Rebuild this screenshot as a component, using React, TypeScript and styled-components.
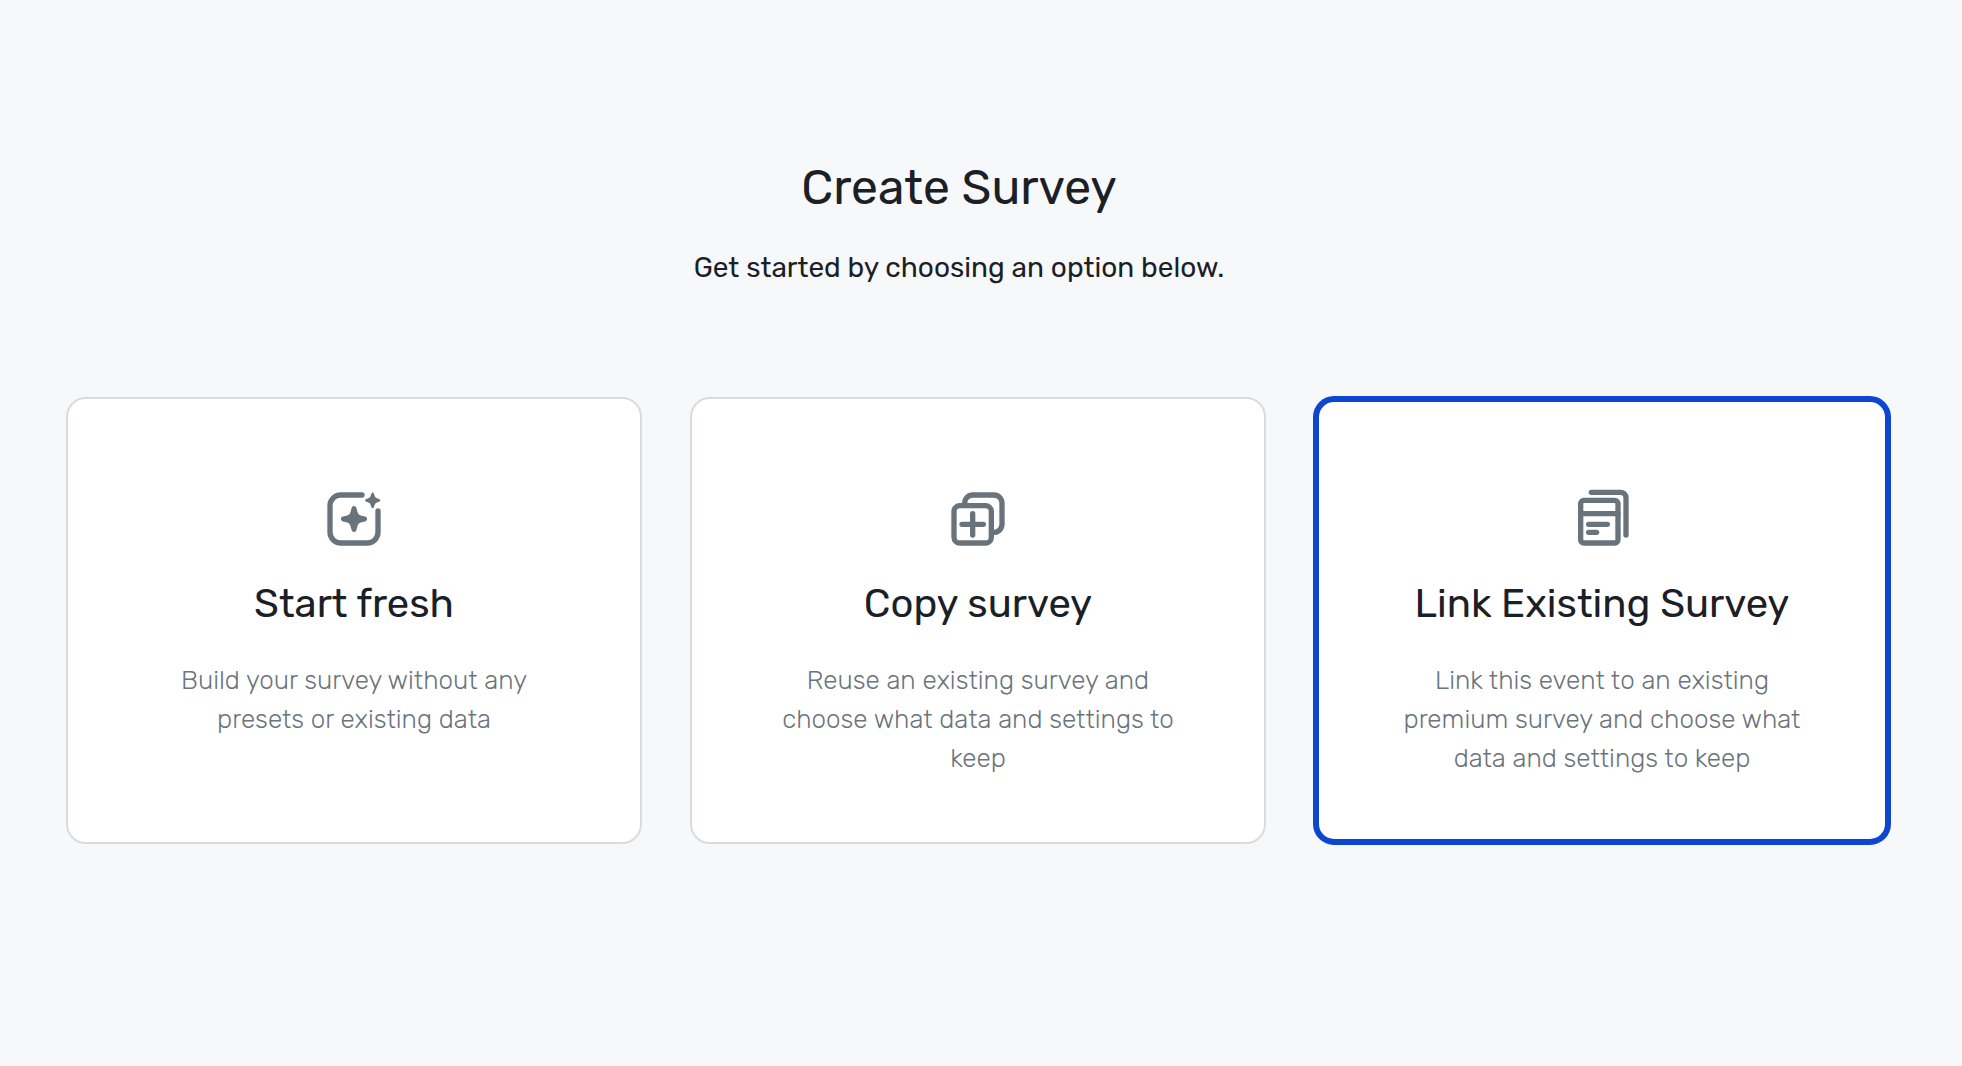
import React, { useState } from "react";
import styled, { createGlobalStyle } from "styled-components";

const GlobalStyle = createGlobalStyle`
  *, *::before, *::after { box-sizing: border-box; }
  body {
    margin: 0;
    background: #f7f8fa;
    color: #1b2026;
    font-family: Rubik, Roboto, "Liberation Sans", sans-serif;
  }
`;

const Page = styled.main`
  min-height: 100vh;
  padding: 156px 72px 64px 66px;
`;

const Header = styled.header`
  margin-bottom: 109px;
  padding-right: 38px;
  text-align: center;
`;

const Title = styled.h1`
  margin: 0 0 28px;
  font-size: 48px;
  font-weight: 400;
  line-height: 64px;
`;

const Subtitle = styled.p`
  margin: 0;
  font-size: 28px;
  line-height: 40px;
`;

const Options = styled.div`
  display: grid;
  grid-template-columns: repeat(3, minmax(0, 1fr));
  gap: 48px;
`;

const OptionCard = styled.button<{ $selected: boolean }>`
  display: flex;
  flex-direction: column;
  align-items: center;
  justify-content: flex-start;
  margin: 0;
  padding: 88px 76px 64px;
  border: 2px solid #d9dbde;
  border-radius: 20px;
  outline: ${(p) => (p.$selected ? "6px solid #0d47d1" : "none")};
  outline-offset: -5px;
  background: #ffffff;
  color: inherit;
  font: inherit;
  text-align: center;
  cursor: pointer;
`;

const Icon = styled.svg`
  width: 64px;
  height: 64px;
  margin-bottom: 28px;
  color: #69737c;
  fill: none;
  stroke: currentColor;
  stroke-width: 2;
  stroke-linecap: round;
  stroke-linejoin: round;
`;

const OptionTitle = styled.span`
  margin-bottom: 32px;
  font-size: 40px;
  line-height: 50px;
`;

const OptionText = styled.span`
  color: #6b737b;
  font-size: 26px;
  font-weight: 300;
  line-height: 39px;
`;

const FreshIcon = () => (
  <Icon viewBox="0 0 24 24" aria-hidden="true">
    <path d="M15 3H7a4 4 0 0 0-4 4v10a4 4 0 0 0 4 4h10a4 4 0 0 0 4-4V9" />
    <path
      fill="currentColor"
      stroke="none"
      d="M12 7.1c.45 0 .8.3.9.75l.45 1.6c.2.65.55 1 1.2 1.2l1.6.45c.45.1.75.45.75.9s-.3.8-.75.9l-1.6.45c-.65.2-1 .55-1.2 1.2l-.45 1.6c-.1.45-.45.75-.9.75s-.8-.3-.9-.75l-.45-1.6c-.2-.65-.55-1-1.2-1.2l-1.6-.45c-.45-.1-.75-.45-.75-.9s.3-.8.75-.9l1.6-.45c.65-.2 1-.55 1.2-1.2l.45-1.6c.1-.45.45-.75.9-.75z"
    />
    <path
      fill="currentColor"
      stroke="none"
      d="M19 2.1c.2 0 .38.14.45.35l.42 1.1c.1.3.28.48.58.58l1.1.42c.2.07.35.25.35.45s-.15.38-.35.45l-1.1.42c-.3.1-.48.28-.58.58l-.42 1.1c-.07.2-.25.35-.45.35s-.38-.15-.45-.35l-.42-1.1c-.1-.3-.28-.48-.58-.58l-1.1-.42c-.2-.07-.35-.25-.35-.45s.15-.38.35-.45l1.1-.42c.3-.1.48-.28.58-.58l.42-1.1c.07-.21.25-.35.45-.35z"
    />
  </Icon>
);

const CopyIcon = () => (
  <Icon viewBox="0 0 24 24" aria-hidden="true">
    <rect x="3" y="7" width="14" height="14" rx="2.2" />
    <path d="M7 6.5V6a3 3 0 0 1 3-3h8a3 3 0 0 1 3 3v8a3 3 0 0 1-3 3h-.5" />
    <path d="M10 10v8M6 14h8" />
  </Icon>
);

const LinkIcon = () => (
  <Icon viewBox="0 0 24 24" aria-hidden="true">
    <rect x="4" y="5" width="14" height="16" rx="1.2" />
    <path d="M4 10h14M7 14h7M7 17h3" />
    <path d="M8 2h11a2 2 0 0 1 2 2v14" />
  </Icon>
);

const options = [
  {
    id: "fresh",
    icon: FreshIcon,
    title: "Start fresh",
    text: "Build your survey without any presets or existing data",
  },
  {
    id: "copy",
    icon: CopyIcon,
    title: "Copy survey",
    text: "Reuse an existing survey and choose what data and settings to keep",
  },
  {
    id: "link",
    icon: LinkIcon,
    title: "Link Existing Survey",
    text: "Link this event to an existing premium survey and choose what data and settings to keep",
  },
];

export default function App() {
  const [selected, setSelected] = useState("link");

  return (
    <>
      <GlobalStyle />
      <Page>
        <Header>
          <Title>Create Survey</Title>
          <Subtitle>Get started by choosing an option below.</Subtitle>
        </Header>
        <Options>
          {options.map(({ id, icon: OptionIcon, title, text }) => (
            <OptionCard
              key={id}
              type="button"
              aria-pressed={selected === id}
              $selected={selected === id}
              onClick={() => setSelected(id)}
            >
              <OptionIcon />
              <OptionTitle>{title}</OptionTitle>
              <OptionText>{text}</OptionText>
            </OptionCard>
          ))}
        </Options>
      </Page>
    </>
  );
}
